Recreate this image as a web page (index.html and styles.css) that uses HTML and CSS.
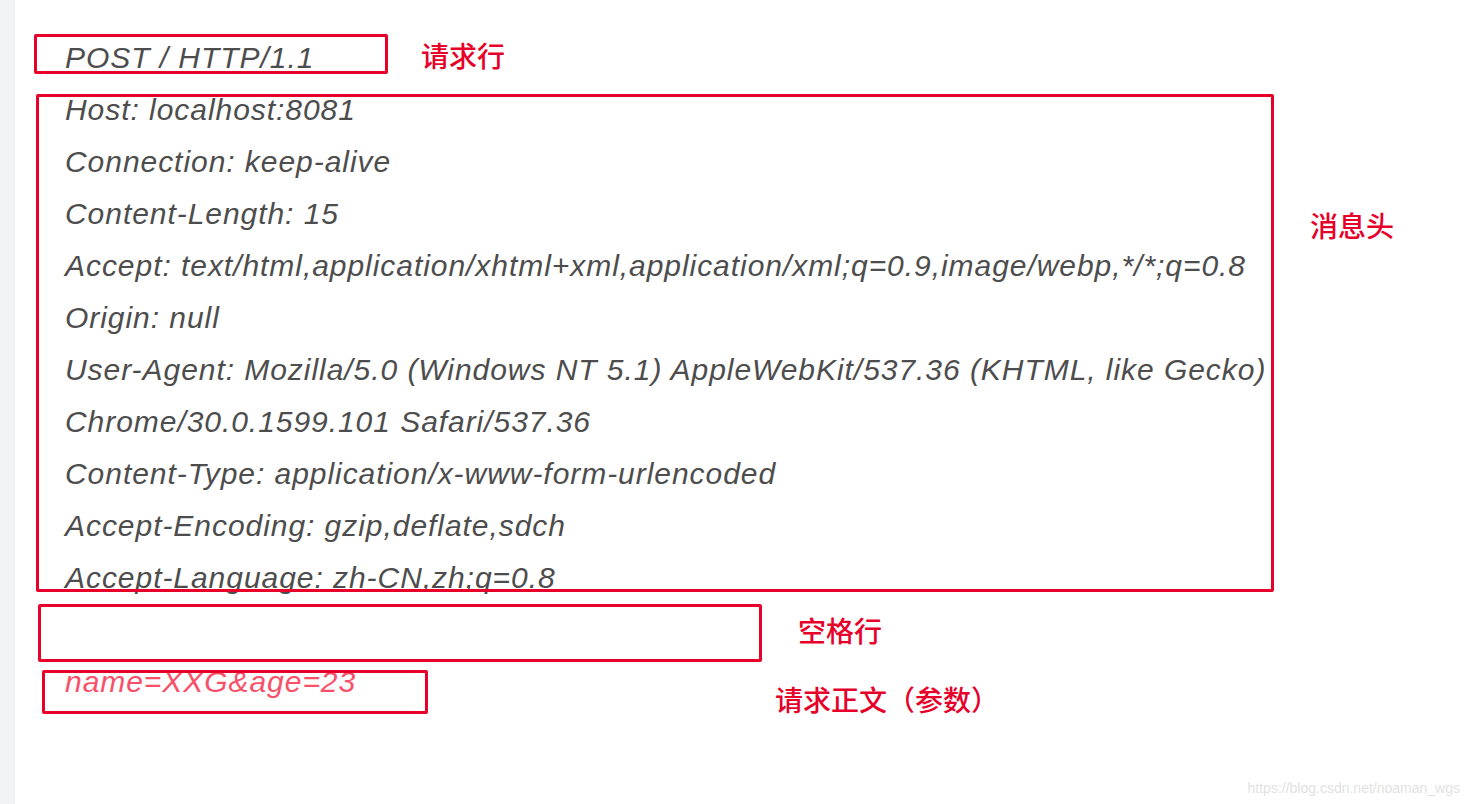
FILE: index.html
```html
<!DOCTYPE html>
<html>
  <head>
    <title>HTTP POST 请求格式</title>
    <link rel="stylesheet" href="styles.css">
  </head>
  <body>
    <div class="page">
      <div class="sidebar"></div>
      <div class="content">
        <div class="line">POST / HTTP/1.1</div>
        <div class="line">Host: localhost:8081</div>
        <div class="line">Connection: keep-alive</div>
        <div class="line">Content-Length: 15</div>
        <div class="line">Accept: text/html,application/xhtml+xml,application/xml;q=0.9,image/webp,*/*;q=0.8</div>
        <div class="line">Origin: null</div>
        <div class="line">User-Agent: Mozilla/5.0 (Windows NT 5.1) AppleWebKit/537.36 (KHTML, like Gecko)</div>
        <div class="line">Chrome/30.0.1599.101 Safari/537.36</div>
        <div class="line">Content-Type: application/x-www-form-urlencoded</div>
        <div class="line">Accept-Encoding: gzip,deflate,sdch</div>
        <div class="line">Accept-Language: zh-CN,zh;q=0.8</div>
        <div class="line blank"></div>
        <div class="line body-line">name=XXG&amp;age=23</div>
      </div>

      <!-- annotation boxes drawn over the request text -->
      <div class="box box-request"></div>
      <div class="box box-headers"></div>
      <div class="box box-blank"></div>
      <div class="box box-body"></div>

      <div class="label label-request">请求行</div>
      <div class="label label-headers">消息头</div>
      <div class="label label-blank">空格行</div>
      <div class="label label-body">请求正文（参数）</div>

      <div class="watermark">https://blog.csdn.net/noaman_wgs</div>
    </div>
  </body>
</html>
```

FILE: styles.css
```css
body {
  margin: 0;
  padding: 0;
  background-color: #fff;
  font-family: "Liberation Sans", Arial, sans-serif;
}

.page {
  position: relative;
  display: flex;
  height: 804px;
  overflow: hidden;
}

.sidebar {
  width: 15px;
  background-color: #f2f3f5;
}

.content {
  flex: 1;
  padding-top: 32px;
  padding-left: 50px;
}

.line {
  height: 52px;
  line-height: 52px;
  font-size: 30px;
  font-style: italic;
  letter-spacing: 0.95px;
  color: #4d4d4d;
  white-space: nowrap;
}

.body-line {
  color: #f9506a;
}

.box {
  position: absolute;
  border: 3px solid #e6002a;
  border-radius: 2px;
  box-sizing: border-box;
}

.box-request {
  left: 34px;
  top: 34px;
  width: 354px;
  height: 40px;
}

.box-headers {
  left: 36px;
  top: 94px;
  width: 1238px;
  height: 498px;
}

.box-blank {
  left: 38px;
  top: 604px;
  width: 724px;
  height: 58px;
}

.box-body {
  left: 42px;
  top: 670px;
  width: 386px;
  height: 44px;
}

.label {
  position: absolute;
  font-family: "Noto Sans CJK SC", "Liberation Sans", sans-serif;
  font-size: 28px;
  font-weight: 500;
  line-height: 40px;
  color: #e6002a;
  white-space: nowrap;
}

.label-request {
  left: 421px;
  top: 35px;
}

.label-headers {
  left: 1310px;
  top: 205px;
}

.label-blank {
  left: 798px;
  top: 610px;
}

.label-body {
  left: 775px;
  top: 679px;
}

.watermark {
  position: absolute;
  right: 10px;
  bottom: 8px;
  font-size: 14px;
  color: #e2e2e2;
}
```
